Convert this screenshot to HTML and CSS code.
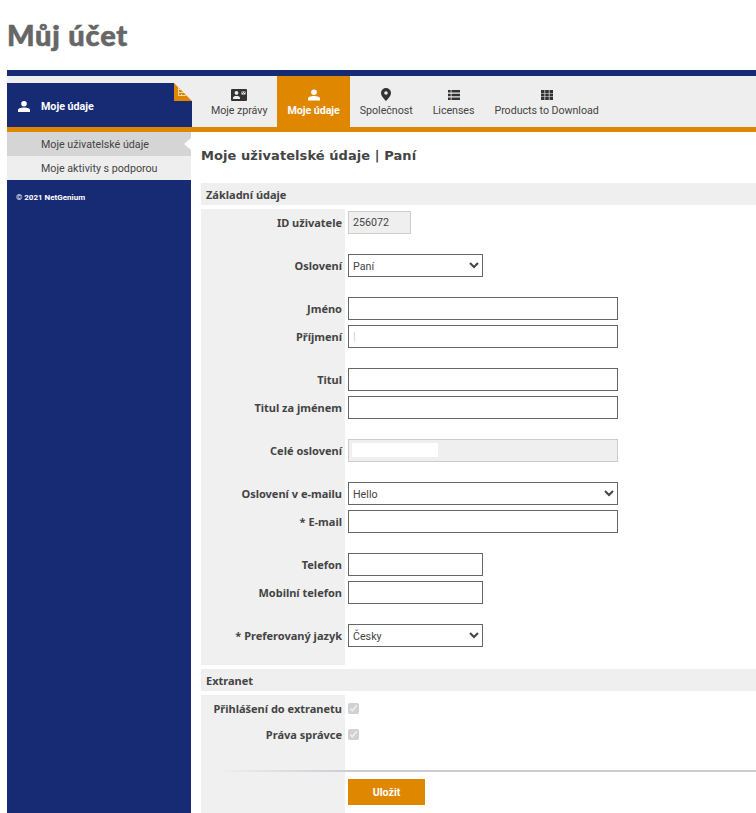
FILE: index.html
```html
<!DOCTYPE html>
<html lang="cs">
<head>
<meta charset="utf-8">
<title>Můj účet</title>
<link rel="stylesheet" href="styles.css">
</head>
<body>
<header class="page-head"><h1>Můj účet</h1></header>
<div class="topline"></div>
<div class="band">
  <div class="side-head">
    <div class="side-title">
      <svg class="ico-side" viewBox="0 0 12 11"><ellipse cx="6" cy="2.700" rx="2.800" ry="2.700" fill="#fff"/><path d="M0 11V9.300C0 7.600 2.500 6.600 6 6.600s6 1 6 2.700V11z" fill="#fff"/></svg>
      <span>Moje údaje</span>
    </div>
    <div class="corner">
      <svg viewBox="0 0 18 18" width="18" height="18"><path d="M0 0h18v18H0z" fill="#eee"/><path d="M0 0 18 18H0z" fill="#e08700"/><path d="M4 4h1v2h2v1H5v2h5v1H5v2h2v-1h1v1h4v1H4z" fill="#f6d9a6"/></svg>
    </div>
  </div>
  <nav class="tabs">
    <a class="tab tab-first"><svg class="ico" viewBox="0 0 16 12"><path fill-rule="evenodd" d="M1 0h14a1 1 0 0 1 1 1v10a1 1 0 0 1-1 1H1a1 1 0 0 1-1-1V1a1 1 0 0 1 1-1zm4.500 2a1.900 1.900 0 1 0 0 3.800 1.900 1.900 0 0 0 0-3.800zM2 10h7V8.700C9 7.700 7.500 7 5.500 7S2 7.700 2 8.700zM10.500 2.500v3h4v-3z"/><path d="M10.800 2.800 12.500 4.300l1.700-1.500" stroke="#222" stroke-width=".7" fill="none"/></svg><span>Moje zprávy</span></a>
    <a class="tab tab-on"><svg class="ico ico-w" viewBox="0 0 12 11"><ellipse cx="6" cy="2.700" rx="2.800" ry="2.700"/><path d="M0 11V9.300C0 7.600 2.500 6.600 6 6.600s6 1 6 2.700V11z"/></svg><span>Moje údaje</span></a>
    <a class="tab"><svg class="ico ico-pin" viewBox="0 0 10 13"><path fill-rule="evenodd" d="M5 0a5 5 0 0 1 5 5C10 8 7 10.800 5 13 3 10.800 0 8 0 5a5 5 0 0 1 5-5zm0 3.200a1.800 1.800 0 1 0 0 3.600 1.800 1.800 0 0 0 0-3.600z"/></svg><span>Společnost</span></a>
    <a class="tab"><svg class="ico ico-sm" viewBox="0 0 12 10"><path d="M0 0h2.700v2.500H0zM3.500 0H12v2.500H3.500zM0 3.700h2.700v2.600H0zM3.500 3.700H12v2.600H3.500zM0 7.500h2.700V10H0zM3.500 7.500H12V10H3.500z"/></svg><span>Licenses</span></a>
    <a class="tab"><svg class="ico ico-sm" viewBox="0 0 12 10"><path d="M0 0h3.500v2.900H0zM4.200 0h3.600v2.900H4.200zM8.500 0H12v2.900H8.500zM0 3.500h3.500v3H0zM4.200 3.500h3.600v3H4.200zM8.500 3.500H12v3H8.500zM0 7.100h3.500V10H0zM4.200 7.100h3.600V10H4.200zM8.500 7.100H12V10H8.500z"/></svg><span>Products to Download</span></a>
  </nav>
</div>
<div class="main">
  <aside class="sidebar">
    <ul class="side-menu">
      <li class="side-on">Moje uživatelské údaje</li>
      <li>Moje aktivity s podporou</li>
    </ul>
    <p class="copy">© 2021 NetGenium</p>
  </aside>
  <section class="content">
    <h2>Moje uživatelské údaje | Paní</h2>
    <h3 class="sec">Základní údaje</h3>
    <div class="rows">
      <div class="row g-top"><label class="lab">ID uživatele</label><div class="val gap-l"><input class="inp w-id ro" value="256072" readonly></div></div>
      <div class="row"><label class="lab">Oslovení</label><div class="val gap-l"><select class="inp w-m"><option>Paní</option></select></div></div>
      <div class="row"><label class="lab">Jméno</label><div class="val"><input class="inp w-l"></div></div>
      <div class="row"><label class="lab">Příjmení</label><div class="val gap-l"><input class="inp w-l mask-in" value="|"></div></div>
      <div class="row"><label class="lab">Titul</label><div class="val"><input class="inp w-l"></div></div>
      <div class="row"><label class="lab">Titul za jménem</label><div class="val gap-l"><input class="inp w-l"></div></div>
      <div class="row"><label class="lab">Celé oslovení</label><div class="val gap-l"><div class="inp w-l ro masked"><span class="blank"></span></div></div></div>
      <div class="row"><label class="lab">Oslovení v e-mailu</label><div class="val"><select class="inp w-l"><option>Hello</option></select></div></div>
      <div class="row"><label class="lab">* E-mail</label><div class="val gap-l"><input class="inp w-l"></div></div>
      <div class="row"><label class="lab">Telefon</label><div class="val"><input class="inp w-m"></div></div>
      <div class="row"><label class="lab">Mobilní telefon</label><div class="val gap-l"><input class="inp w-m"></div></div>
      <div class="row"><label class="lab">* Preferovaný jazyk</label><div class="val g-end"><select class="inp w-m"><option>Česky</option></select></div></div>
    </div>
    <h3 class="sec sec-2">Extranet</h3>
    <div class="rows">
      <div class="row chk-row chk-first"><label class="lab">Přihlášení do extranetu</label><div class="val chk-val"><input type="checkbox" checked disabled></div></div>
      <div class="row chk-row chk-last"><label class="lab">Práva správce</label><div class="val chk-val"><input type="checkbox" checked disabled></div></div>
      <div class="row btn-row"><div class="lab"></div><div class="val btn-val"><button class="save" type="button">Uložit</button></div><div class="rule"></div></div>
    </div>
  </section>
</div>
</body>
</html>
```
FILE: styles.css
```css
* { box-sizing: border-box; }
html, body { margin: 0; padding: 0; height: 813px; overflow: hidden; background: #fff; }
body { font-family: Roboto, sans-serif; font-size: 10.700px; color: #444; padding-left: 7px; }
.page-head { height: 70px; margin-left: -7px; padding: 15px 0 0 7px; }
h1 { margin: 0; font: 900 29px/40px Lato, sans-serif; color: #666; letter-spacing: .8px; -webkit-text-stroke: .6px #666; }
.topline { height: 6px; background: #172b75; }
.band { display: flex; height: 56px; background: #eee; border-bottom: 5px solid #e08700; }
.side-head { width: 185px; margin-top: 7px; background: #172b75; color: #fff; position: relative; }
.side-title { display: flex; align-items: center; height: 44px; padding-left: 11px; gap: 11px; font-weight: 700; padding-top: 2px; }
.ico-side { width: 12px; height: 11px; }
.corner { position: absolute; top: 0; right: 0; width: 18px; height: 18px; }
.corner svg { display: block; }
.tabs { display: flex; flex: 1; }
.tab { display: flex; flex-direction: column; align-items: center; height: 51px; padding: 13px 10px 0; color: #444; line-height: 15px; letter-spacing: -.05px; }
.tab-first { margin-left: 9px; }
.tab-on { background: #e08700; color: #fff; font-weight: 700; }
.ico { height: 12px; width: 16px; margin-bottom: 2px; fill: #333; }
.ico-w { fill: #fff; width: 12px; }
.ico-pin { width: 10px; height: 13px; margin: -1px 0 2px; }
.ico-sm { width: 12px; height: 10px; margin: 1px 0 3px; }
.main { display: flex; height: 681px; }
.sidebar { width: 184px; background: #172b75; }
.side-menu { list-style: none; margin: 0; padding: 0; }
.side-menu li { height: 24px; line-height: 25px; padding-left: 34px; background: #eee; }
.side-menu .side-on { background: #d5d5d5; position: relative; }
.side-on::after { content: ""; position: absolute; right: 0; top: 6px; border: 6px solid transparent; border-right: 7px solid #fff; border-left: 0; }
.copy { margin: 13px 0 0 9px; color: #fff; font-size: 8px; line-height: 10px; font-weight: 700; }
.content { flex: 1; padding-left: 10px; }
h2 { margin: 0; height: 51px; padding-top: 15px; font-family: "DejaVu Sans", sans-serif; font-size: 13px; line-height: 17px; font-weight: 700; color: #444; letter-spacing: .07px; }
.sec { margin: 0; height: 22px; line-height: 23px; padding-left: 5px; font-family: "Noto Sans", sans-serif; font-size: 11px; background: #efefef; font-weight: 700; }
.sec-2 { margin-top: 4px; }
.rows { margin-top: 4px; }
.row { display: flex; position: relative; }
.lab { width: 144px; flex: none; background: #f0f0f0; text-align: right; font-family: "Noto Sans", sans-serif; font-size: 11px; font-weight: 700; line-height: 24px; padding-right: 3px; }
.val { padding: 0 0 5px 3px; }
.gap-l { padding-bottom: 20px; }
.g-top .lab, .g-top .val { padding-top: 2px; }
.g-end { padding-bottom: 18px; }
.inp { display: block; height: 23px; border: 1px solid #666; background: #fff; font: 10.700px Roboto, sans-serif; color: #444; padding: 0 4px; border-radius: 0; }
select.inp { padding: 1px 0 0; }
.w-id { width: 63px; }
.w-m { width: 135px; }
.w-l { width: 270px; }
.ro { background: #efefef; border-color: #ccc; }
.mask-in { color: #ccc; }
.masked { padding: 3px; }
.blank { display: block; width: 86px; height: 14px; background: #fff; }
.chk-row .lab { height: 26px; line-height: 28px; }
.chk-val input { display: block; margin: 8px 0 0 0; width: 11px; height: 11px; }
.chk-val { padding: 0 0 0 3px; }
.btn-row { height: 66px; }
.btn-val { padding: 32px 0 0 3px; }
.save { width: 77px; height: 26px; border: 0; background: #e08700; color: #fff; font: 700 10.700px Roboto, sans-serif; }
.rule { position: absolute; left: 14px; right: 0; top: 23px; height: 2px; background: linear-gradient(to right, #f0f0f0, #ccccd2 25%); }
```
